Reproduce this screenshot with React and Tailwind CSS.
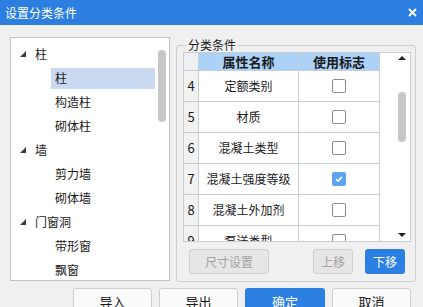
import React from 'react'

const tree = [
  { label: '柱', root: true },
  { label: '柱', selected: true },
  { label: '构造柱' },
  { label: '砌体柱' },
  { label: '墙', root: true },
  { label: '剪力墙' },
  { label: '砌体墙' },
  { label: '门窗洞', root: true },
  { label: '带形窗' },
  { label: '飘窗' },
]

const rows = [
  { n: 4, name: '定额类别' },
  { n: 5, name: '材质' },
  { n: 6, name: '混凝土类型' },
  { n: 7, name: '混凝土强度等级', checked: true },
  { n: 8, name: '混凝土外加剂' },
  { n: 9, name: '泵送类型' },
]

function Checkbox({ checked }) {
  if (checked) {
    return (
      <span className="flex h-[14px] w-[14px] items-center justify-center rounded-[2px] bg-[#5ea3ef]">
        <svg width="10" height="10" viewBox="0 0 10 10">
          <path d="M2 5.2 L4.2 7.2 L8 2.8" fill="none" stroke="#fff" strokeWidth="1.6" />
        </svg>
      </span>
    )
  }
  return <span className="h-[14px] w-[14px] rounded-[2px] border border-[#8c8c8c] bg-white" />
}

export default function App() {
  return (
    <div className="h-[307px] w-[423px] overflow-hidden bg-[#f0f0f0] font-['Noto_Sans_CJK_SC','Microsoft_YaHei',sans-serif] text-[12px] text-[#1a1a1a]">
      {/* title bar */}
      <div className="flex h-[25px] items-center justify-between bg-[#2c7fe0] pl-[5px] pr-[5px] text-white">
        <span className="text-[12px] leading-[16px]">设置分类条件</span>
        <svg width="9" height="9" viewBox="0 0 9 9" className="mr-[1px]">
          <path d="M1 1 L8 8 M8 1 L1 8" stroke="#fff" strokeWidth="1.8" />
        </svg>
      </div>

      <div className="flex gap-[6px] pl-[10px] pt-[12px]">
        {/* tree */}
        <div className="flex h-[244px] w-[160px] overflow-hidden border border-[#c4c4c4] bg-white">
          <div className="flex-1 pt-[4px]">
            {tree.map((t, i) =>
              t.root ? (
                <div key={i} className="flex h-[24px] items-center">
                  <svg width="6" height="6" viewBox="0 0 6 6" className="ml-[9px] mr-[9px]">
                    <polygon points="6,0 6,6 0,6" fill="#3c3c3c" />
                  </svg>
                  <span className="leading-[16px]">{t.label}</span>
                </div>
              ) : (
                <div key={i} className="flex h-[24px] items-center pl-[40px]">
                  <div className={`flex h-[21px] flex-1 items-center pl-[4px] ${t.selected ? 'bg-[#c9d9f0]' : ''}`}>
                    <span className="leading-[16px]">{t.label}</span>
                  </div>
                </div>
              )
            )}
          </div>
          <div className="w-[14px] pl-[3px] pt-[12px]">
            <div className="h-[72px] w-[8px] rounded-full bg-[#c6c6c6]" />
          </div>
        </div>

        {/* classification conditions */}
        <fieldset className="h-[245px] w-[240px] min-w-0 rounded-[3px] border border-[#cfcfcf] pl-[6px] pr-[4px]">
          <legend className="ml-[3px] px-[2px] text-[12px] leading-[16px]">分类条件</legend>
          <div className="-mt-px flex h-[190px] w-[228px] overflow-hidden border border-[#c9ccd1] bg-white">
            <div className="flex w-[196px] flex-col">
              <div className="flex h-[18px] shrink-0 border-b border-[#c9ccd1]">
                <div className="w-[15px] border-r border-[#c9ccd1] bg-[#eef0f3]" />
                <div className="flex w-[100px] items-center justify-center border-r border-[#c9ccd1] bg-[#acd2f8] text-[13px] font-bold leading-[16px]">属性名称</div>
                <div className="flex w-[81px] items-center justify-center border-r border-[#c9ccd1] bg-[#acd2f8] text-[13px] font-bold leading-[16px]">使用标志</div>
              </div>
              {rows.map((r) => (
                <div key={r.n} className="flex h-[31px] shrink-0 border-b border-[#c9ccd1]">
                  <div className="flex w-[15px] items-center justify-center border-r border-[#c9ccd1] bg-[#f2f2f2] text-[13px]">{r.n}</div>
                  <div className="flex w-[100px] items-center justify-center border-r border-[#c9ccd1] leading-[16px]">{r.name}</div>
                  <div className="flex w-[81px] items-center justify-center border-r border-[#c9ccd1]">
                    <Checkbox checked={r.checked} />
                  </div>
                </div>
              ))}
            </div>
            <div className="flex flex-1 justify-end">
              <div className="flex w-[17px] flex-col items-center pb-[4px] pt-[3px]">
                <svg width="8" height="4" viewBox="0 0 8 4">
                  <polygon points="0,4 8,4 4,0" fill="#222" />
                </svg>
                <div className="mt-[32px] h-[50px] w-[8px] rounded-full bg-[#c6c6c6]" />
                <div className="flex-1" />
                <svg width="8" height="4" viewBox="0 0 8 4">
                  <polygon points="0,0 8,0 4,4" fill="#222" />
                </svg>
              </div>
            </div>
          </div>
          <div className="mt-[7px] flex items-center justify-between px-[6px]">
            <button className="h-[25px] w-[80px] rounded-[3px] border border-[#d0d0d0] bg-[#e6e6e6] text-[12px] text-[#a3a3a3]">尺寸设置</button>
            <div className="flex gap-[12px]">
              <button className="h-[25px] w-[40px] rounded-[3px] border border-[#d0d0d0] bg-[#e6e6e6] text-[12px] text-[#a3a3a3]">上移</button>
              <button className="h-[25px] w-[40px] rounded-[3px] bg-[#2c80e2] text-[12px] text-white">下移</button>
            </div>
          </div>
        </fieldset>
      </div>

      {/* footer buttons */}
      <div className="mt-[6px] flex justify-end gap-[7px] pr-[12px]">
        <button className="h-[28px] w-[79px] rounded-[3px] border border-[#cdcdcd] bg-[#fafafa] text-[13px]">导入</button>
        <button className="h-[28px] w-[79px] rounded-[3px] border border-[#cdcdcd] bg-[#fafafa] text-[13px]">导出</button>
        <button className="h-[28px] w-[80px] rounded-[3px] bg-[#2c80e2] text-[13px] text-white">确定</button>
        <button className="h-[28px] w-[79px] rounded-[3px] border border-[#cdcdcd] bg-[#fafafa] text-[13px]">取消</button>
      </div>
    </div>
  )
}
